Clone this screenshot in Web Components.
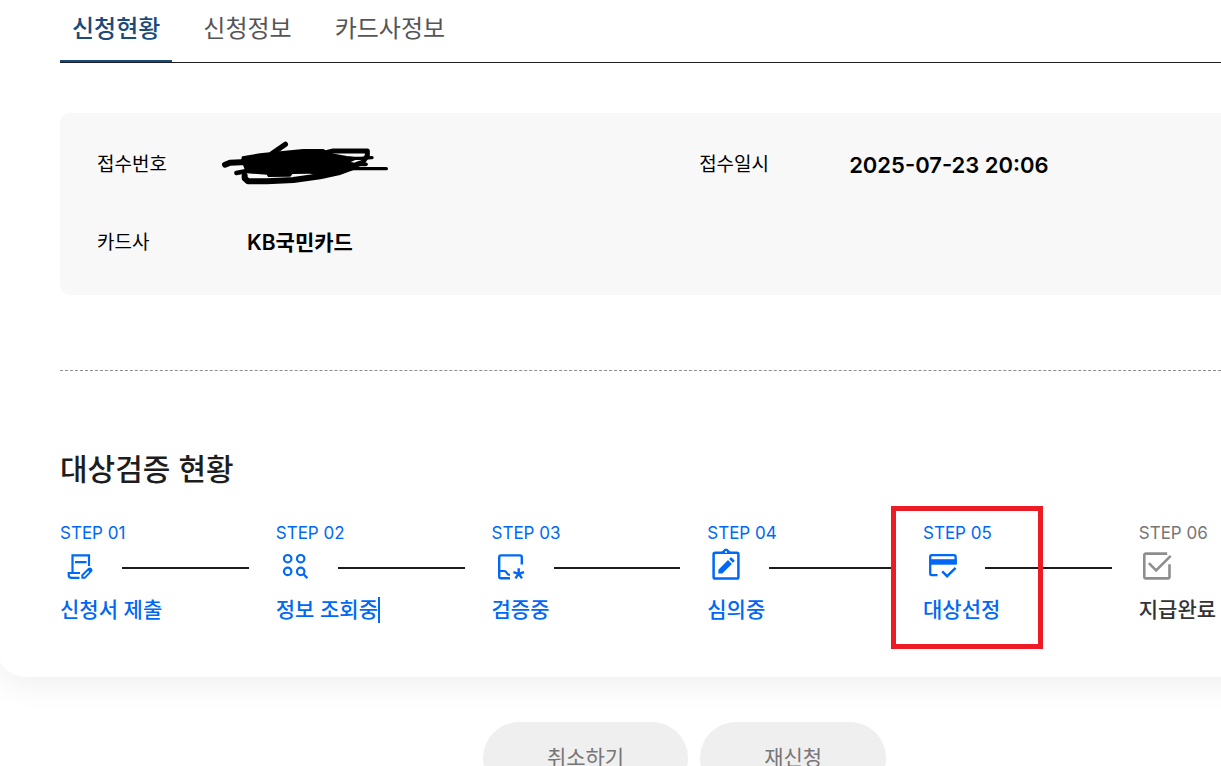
<!DOCTYPE html>
<html lang="ko">
<head>
<meta charset="UTF-8">
<meta name="viewport" content="width=device-width, initial-scale=1">
<title>신청현황</title>
<style>
    html, body {
        height: 100%;
    }

    body {
        margin: 0;
        overflow: hidden;
        background: #fff;
        color: #000;
        font-family: Inter, "Noto Sans CJK KR", sans-serif;
    }
</style>
</head>
<body>
<status-page>
    <status-tabs items="신청현황,신청정보,카드사정보"></status-tabs>
    <info-panel>
        <info-item label="접수번호"><scribble-mark></scribble-mark></info-item>
        <info-item label="접수일시" numeric>2025-07-23 20:06</info-item>
        <info-item label="카드사">KB국민카드</info-item>
    </info-panel>
    <step-list heading="대상검증 현황">
        <step-item step="STEP 01" icon="form" done>신청서 제출</step-item>
        <step-item step="STEP 02" icon="search" done caret>정보 조회중</step-item>
        <step-item step="STEP 03" icon="verify" done>검증중</step-item>
        <step-item step="STEP 04" icon="review" done>심의중</step-item>
        <step-item step="STEP 05" icon="card" done marked>대상선정</step-item>
        <step-item step="STEP 06" icon="check" last>지급완료</step-item>
    </step-list>
    <pill-button slot="actions">취소하기</pill-button>
    <pill-button slot="actions">재신청</pill-button>
</status-page>

<script>
const icons = {
    form: `
        <path d="M12.5 25V7.3H29V18M15 14.2H26.5M20 25H8.7V27Q8.7 29.8 11.5 29.8H19.5" stroke-width="2.2"/>
        <path d="M22.3 29.8V27.2L28.8 20.8Q29.8 20 30.8 21L31.2 21.4Q32 22.3 31.2 23.2L24.8 29.8Z" stroke-width="1.9"/>
        <path d="M27.5 22L30.8 20L32.2 21.8L30 24.5Z" fill="currentColor" stroke="none"/>`,
    search: `
        <circle cx="11.7" cy="10.7" r="3.7"/>
        <circle cx="24.7" cy="10.7" r="3.7"/>
        <circle cx="11.7" cy="23.4" r="3.7"/>
        <circle cx="24.7" cy="23.4" r="3.7"/>
        <path d="M27.3 26L31.4 30.1"/>`,
    verify: `
        <path d="M18 30.2H9Q7.2 30.2 7.2 28.4V9.2Q7.2 7.4 9 7.4H28Q29.8 7.4 29.8 9.2V16.5" stroke-width="2.4"/>
        <path d="M7.5 23H12.2Q14.2 23.2 15 25.2Q15.8 26.8 18 26.8"/>
        <path d="M26.7 20.2V25.8M26.7 25.8L21.4 24.1M26.7 25.8L32 24.1M26.7 25.8L23.4 30.4M26.7 25.8L30 30.4" stroke-width="2.4"/>`,
    review: `
        <rect x="6.6" y="4.8" width="24.8" height="25.7" rx="1.6" stroke-width="2.5"/>
        <path d="M14.8 4.5Q15 3.2 16.3 3Q17 1 19 1Q21 1 21.7 3Q23 3.2 23.2 4.5Z" fill="currentColor" stroke-width="1"/>
        <circle cx="19" cy="4" r="1.1" fill="#fff" stroke="none"/>
        <path d="M11.4 25.6V21.7L21 12.1L24.9 16L15.3 25.6ZM22.1 11L23.6 9.6Q24.2 9.1 24.8 9.7L27.3 12.2Q27.9 12.8 27.3 13.4L25.9 14.8Z" fill="currentColor" stroke="none"/>`,
    card: `
        <path d="M14.5 27.2H8.8Q7.2 27.2 7.2 25.6V8.8Q7.2 7.2 8.8 7.2H31Q32.6 7.2 32.6 8.8V16" stroke-width="2.3"/>
        <path d="M7 11.2H33.7V16.7H7Z" fill="currentColor" stroke="none"/>
        <path d="M19.2 23.3L24.1 28.2L32.6 19.9" stroke-width="2.4"/>`,
    check: `
        <path d="M28.2 5.6H7Q5.3 5.6 5.3 7.3V28.7Q5.3 30.4 7 30.4H28.8Q30.5 30.4 30.5 28.7V16.2" stroke-width="2.6"/>
        <path d="M9.9 15.2L17.1 22.4L31.7 7.8" stroke-width="2.6"/>`
};

class StatusPage extends HTMLElement {
    constructor() {
        super();
        this.attachShadow({ mode: 'open' });
        this.shadowRoot.innerHTML = `
            <style>
                :host {
                    display: block;
                }
                /* the sheet runs past both sides of the window */
                .sheet {
                    margin: 0 -40px 0 -4px;
                    padding: 0 40px 53px 64px;
                    background: #fff;
                    border-radius: 0 0 30px 30px;
                    box-shadow: 0 10px 30px rgba(0, 0, 0, 0.06);
                }
                .actions {
                    display: flex;
                    justify-content: center;
                    gap: 12px;
                    padding: 45px 0 45px 148px;
                }
            </style>
            <main class="sheet"><slot></slot></main>
            <div class="actions"><slot name="actions"></slot></div>
        `;
    }
}

class StatusTabs extends HTMLElement {
    constructor() {
        super();
        this.attachShadow({ mode: 'open' });
    }

    connectedCallback() {
        const items = this.getAttribute('items').split(',');
        this.shadowRoot.innerHTML = `
            <style>
                :host {
                    display: block;
                    margin-bottom: 50px;
                }
                .tabs {
                    display: flex;
                    gap: 19px;
                    border-bottom: 1px solid #1d1d1d;
                }
                button {
                    padding: 11px 12px 13px;
                    border: 0;
                    border-bottom: 2px solid transparent;
                    background: none;
                    color: #555;
                    font: inherit;
                    font-size: 24px;
                    line-height: 36px;
                    cursor: pointer;
                }
                button[aria-selected="true"] {
                    border-bottom-color: #1b4b7c;
                    color: #1b4b7c;
                    font-weight: 500;
                }
            </style>
            <div class="tabs" role="tablist">
                ${items.map((item, index) => `<button type="button" role="tab" aria-selected="${index === 0}">${item}</button>`).join('')}
            </div>
        `;

        const buttons = this.shadowRoot.querySelectorAll('button');
        buttons.forEach((button) => {
            button.addEventListener('click', () => {
                buttons.forEach((other) => other.setAttribute('aria-selected', other === button));
            });
        });
    }
}

class InfoPanel extends HTMLElement {
    constructor() {
        super();
        this.attachShadow({ mode: 'open' });
        this.shadowRoot.innerHTML = `
            <style>
                :host {
                    display: grid;
                    grid-template-columns: 15fr 13fr;
                    row-gap: 48px;
                    padding: 37px 0 37px 37px;
                    background: #f8f8f8;
                    border-radius: 10px 0 0 10px;
                }
            </style>
            <slot></slot>
        `;
    }
}

class InfoItem extends HTMLElement {
    constructor() {
        super();
        this.attachShadow({ mode: 'open' });
    }

    connectedCallback() {
        this.shadowRoot.innerHTML = `
            <style>
                :host {
                    display: block;
                }
                dl {
                    display: flex;
                    margin: 0;
                    line-height: 30px;
                }
                dt {
                    flex: 0 0 150px;
                    font-size: 19px;
                }
                dd {
                    position: relative;
                    margin: 0;
                    font-size: 21px;
                    font-weight: 600;
                }
                :host([numeric]) dd {
                    font-size: 22px;
                }
            </style>
            <dl>
                <dt>${this.getAttribute('label')}</dt>
                <dd><slot></slot></dd>
            </dl>
        `;
    }
}

class ScribbleMark extends HTMLElement {
    constructor() {
        super();
        this.attachShadow({ mode: 'open' });
        this.shadowRoot.innerHTML = `
            <style>
                :host {
                    position: absolute;
                    top: -15px;
                    left: -37px;
                }
                svg {
                    display: block;
                }
            </style>
            <svg width="190" height="90" viewBox="0 0 570 270" fill="none" stroke="#000" stroke-linecap="round" stroke-linejoin="round" aria-hidden="true">
                <path d="M98 67L150 58L210 52L280 45L340 45L356 56L410 66L440 70L412 82L450 90L420 102L380 117L340 125L300 113L246 114L240 122L176 123L172 116L110 112L104 94L96 80Z" fill="#000" stroke-width="6"/>
                <path d="M45 89L60 83L110 81" stroke-width="18"/>
                <path d="M79 114L110 108" stroke-width="13"/>
                <path d="M186 56L226 28" stroke-width="16"/>
                <path d="M345 54L370 48H472V62L458 82L440 88" stroke-width="15"/>
                <path d="M410 70L450 70L486 68" stroke-width="10"/>
                <path d="M440 88H468" stroke-width="11"/>
                <path d="M380 104L430 101H529" stroke-width="10"/>
                <path d="M104 122V130L114 139H170L250 135L330 124L385 112L430 96" stroke-width="18"/>
            </svg>
        `;
    }
}

class StepList extends HTMLElement {
    constructor() {
        super();
        this.attachShadow({ mode: 'open' });
    }

    connectedCallback() {
        this.shadowRoot.innerHTML = `
            <style>
                :host {
                    display: block;
                }
                hr {
                    margin: 75px 0 78px;
                    border: 0;
                    border-top: 1px dashed #8e8e8e;
                }
                h2 {
                    margin: 0 0 34px;
                    color: #1d1d1d;
                    font-size: 30px;
                    font-weight: 500;
                    line-height: 40px;
                }
                .list {
                    display: flex;
                    padding-right: 5px;
                }
            </style>
            <hr>
            <h2>${this.getAttribute('heading')}</h2>
            <div class="list" role="list"><slot></slot></div>
        `;
    }
}

class StepItem extends HTMLElement {
    constructor() {
        super();
        this.attachShadow({ mode: 'open' });
    }

    connectedCallback() {
        this.setAttribute('role', 'listitem');
        this.shadowRoot.innerHTML = `
            <style>
                :host {
                    display: block;
                    position: relative;
                    flex: 1;
                    color: #333;
                    --step-color: #767676;
                    --icon-color: #8e8e8e;
                }
                :host([done]) {
                    color: #0068f5;
                    --step-color: #0068f5;
                    --icon-color: #0068f5;
                }
                :host([last]) {
                    flex: none;
                }
                .step {
                    color: var(--step-color);
                    font-size: 17px;
                    line-height: 20px;
                }
                .track {
                    display: flex;
                    align-items: center;
                    margin: 5px 0 8px;
                }
                svg {
                    flex: none;
                    color: var(--icon-color);
                }
                .line {
                    flex: 1;
                    height: 2px;
                    margin: 0 27px 0 22px;
                    background: #1d1d1d;
                }
                .name {
                    display: flex;
                    align-items: center;
                    font-size: 21px;
                    font-weight: 500;
                    line-height: 28px;
                    white-space: nowrap;
                }
                .caret {
                    width: 2px;
                    height: 26px;
                    background: #0068f5;
                }
                .mark {
                    position: absolute;
                    top: -17px;
                    left: -32px;
                    z-index: 1;
                    box-sizing: border-box;
                    width: 152px;
                    height: 143px;
                    border: 5px solid #ed1c24;
                    pointer-events: none;
                }
            </style>
            <div class="step">${this.getAttribute('step')}</div>
            <div class="track">
                <svg width="40" height="40" viewBox="0 0 40 40" fill="none" stroke="currentColor" stroke-width="2.2" aria-hidden="true">${icons[this.getAttribute('icon')]}</svg>
                ${this.hasAttribute('last') ? '' : '<span class="line"></span>'}
            </div>
            <div class="name"><slot></slot>${this.hasAttribute('caret') ? '<span class="caret"></span>' : ''}</div>
            ${this.hasAttribute('marked') ? '<div class="mark"></div>' : ''}
        `;
    }
}

class PillButton extends HTMLElement {
    constructor() {
        super();
        this.attachShadow({ mode: 'open' });
        this.shadowRoot.innerHTML = `
            <style>
                :host {
                    display: block;
                }
                button {
                    padding: 20px 64px;
                    border: 0;
                    border-radius: 36px;
                    background: #efefef;
                    color: #767676;
                    font: inherit;
                    font-size: 21px;
                    line-height: 32px;
                    cursor: pointer;
                }
            </style>
            <button type="button"><slot></slot></button>
        `;
    }
}

customElements.define('status-page', StatusPage);
customElements.define('status-tabs', StatusTabs);
customElements.define('info-panel', InfoPanel);
customElements.define('info-item', InfoItem);
customElements.define('scribble-mark', ScribbleMark);
customElements.define('step-list', StepList);
customElements.define('step-item', StepItem);
customElements.define('pill-button', PillButton);
</script>
</body>
</html>
